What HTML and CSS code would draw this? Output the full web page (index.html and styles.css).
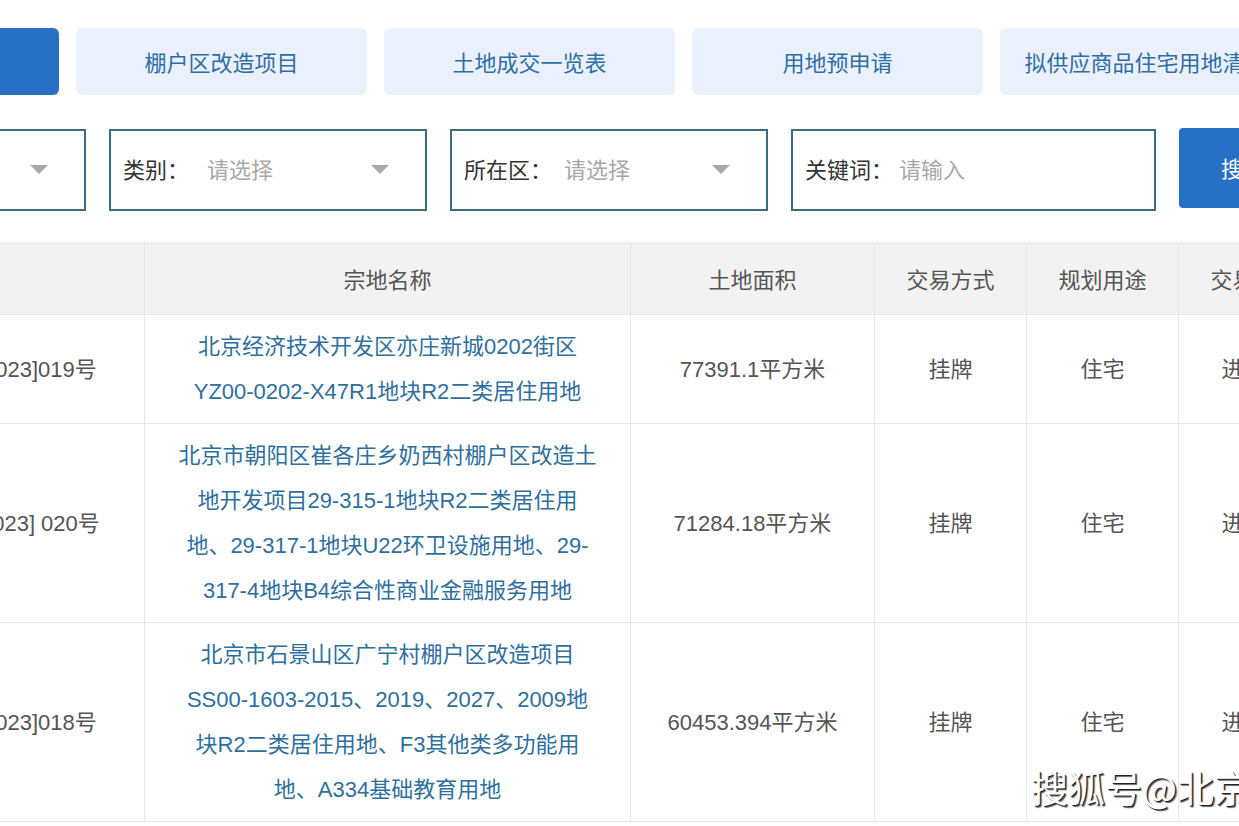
FILE: index.html
```html
<!DOCTYPE html>
<html lang="zh-CN">
<head>
    <meta charset="UTF-8">
    <meta name="viewport" content="width=device-width, initial-scale=1.0">
    <title>土地供应信息</title>
    <link rel="stylesheet" href="styles.css">
</head>
<body>
    <div class="page">
        <nav class="tabs">
            <a class="tab active">经营性用地供应</a>
            <a class="tab">棚户区改造项目</a>
            <a class="tab">土地成交一览表</a>
            <a class="tab">用地预申请</a>
            <a class="tab">拟供应商品住宅用地清单</a>
        </nav>

        <div class="filters">
            <div class="filter">
                <span class="filter-label">年份：</span>
                <span class="filter-value">请选择</span>
                <span class="caret"></span>
            </div>
            <div class="filter">
                <span class="filter-label">类别：</span>
                <span class="filter-value wide">请选择</span>
                <span class="caret"></span>
            </div>
            <div class="filter">
                <span class="filter-label">所在区：</span>
                <span class="filter-value">请选择</span>
                <span class="caret"></span>
            </div>
            <div class="filter keyword">
                <span class="filter-label">关键词：</span>
                <span class="filter-value narrow">请输入</span>
            </div>
            <button class="search-btn">搜索</button>
        </div>

        <table class="land-table">
            <colgroup>
                <col class="col-no">
                <col class="col-name">
                <col class="col-area">
                <col class="col-small">
                <col class="col-small">
                <col class="col-small">
            </colgroup>
            <thead>
                <tr>
                    <th>公告编号</th>
                    <th>宗地名称</th>
                    <th>土地面积</th>
                    <th>交易方式</th>
                    <th>规划用途</th>
                    <th>交易状态</th>
                </tr>
            </thead>
            <tbody>
                <tr>
                    <td class="no">京土整储挂(亦)[2023]019号</td>
                    <td class="name"><a>北京经济技术开发区亦庄新城0202街区<br>YZ00-0202-X47R1地块R2二类居住用地</a></td>
                    <td>77391.1平方米</td>
                    <td>挂牌</td>
                    <td>住宅</td>
                    <td>进行中</td>
                </tr>
                <tr>
                    <td class="no">京土整储挂(朝)[2023] 020号</td>
                    <td class="name"><a>北京市朝阳区崔各庄乡奶西村棚户区改造土<br>地开发项目29-315-1地块R2二类居住用<br>地、29-317-1地块U22环卫设施用地、29-<br>317-4地块B4综合性商业金融服务用地</a></td>
                    <td>71284.18平方米</td>
                    <td>挂牌</td>
                    <td>住宅</td>
                    <td>进行中</td>
                </tr>
                <tr>
                    <td class="no">京土整储挂(石)[2023]018号</td>
                    <td class="name"><a>北京市石景山区广宁村棚户区改造项目<br>SS00-1603-2015、2019、2027、2009地<br>块R2二类居住用地、F3其他类多功能用<br>地、A334基础教育用地</a></td>
                    <td>60453.394平方米</td>
                    <td>挂牌</td>
                    <td>住宅</td>
                    <td>进行中</td>
                </tr>
            </tbody>
        </table>
    </div>

    <div class="watermark">搜狐号@北京青年报</div>
</body>
</html>
```

FILE: styles.css
```css
html, body {
    margin: 0;
    overflow: hidden;
    background-color: #fff;
}
body {
    font-family: "Liberation Sans", "Noto Sans CJK SC", sans-serif;
    color: #555;
    font-size: 22px;
}
.page {
    margin-left: -232px;
    padding-top: 28px;
    width: 1700px;
}

/* tabs */
.tabs {
    display: flex;
    gap: 17px;
}
.tab {
    width: 291px;
    height: 67px;
    padding-bottom: 2px;
    box-sizing: border-box;
    display: flex;
    align-items: center;
    justify-content: center;
    border-radius: 6px;
    background-color: #eaf1fc;
    color: #2d6ea6;
    white-space: nowrap;
    overflow: hidden;
}
.tab.active {
    background-color: #2870c6;
    color: #fff;
}

/* filters */
.filters {
    display: flex;
    align-items: flex-start;
    gap: 23px;
    margin-top: 34px;
}
.filter {
    position: relative;
    box-sizing: border-box;
    width: 318px;
    height: 82px;
    border: 2px solid #406a7e;
    display: flex;
    align-items: center;
    padding-left: 12px;
    padding-bottom: 5px;
}
.filter.keyword {
    width: 365px;
}
.filter-label {
    color: #333;
}
.filter-value {
    margin-left: 12px;
    color: #a8a8a8;
}
.filter-value.wide {
    margin-left: 18px;
}
.filter-value.narrow {
    margin-left: 6px;
}
.caret {
    position: absolute;
    right: 36px;
    top: 34px;
    width: 0;
    height: 0;
    border-left: 9px solid transparent;
    border-right: 9px solid transparent;
    border-top: 9px solid #a9a9a9;
}
.search-btn {
    width: 128px;
    height: 80px;
    margin-top: -1px;
    padding-bottom: 4px;
    border: none;
    border-radius: 4px;
    background-color: #2870c6;
    color: #fff;
    font-family: inherit;
    font-size: 22px;
}

/* table */
.land-table {
    margin-top: 32px;
    table-layout: fixed;
    border-collapse: collapse;
    width: 1562px;
    border-top: 1px solid #dedede;
    box-shadow: 0 -2px 3px rgba(0,0,0,0.04);
}
.col-no { width: 376px; }
.col-name { width: 486px; }
.col-area { width: 244px; }
.col-small { width: 152px; }
.land-table th,
.land-table td {
    border: 1px solid #e6e6e6;
    text-align: center;
    white-space: nowrap;
    overflow: hidden;
    color: #555;
    font-weight: normal;
}
.land-table th {
    height: 67px;
    padding: 0 0 3px;
    background-color: #f2f2f2;
}
.land-table td {
    padding: 9px 0;
    line-height: 45px;
}
.land-table td.no {
    padding-left: 14px;
}
.land-table td.name a {
    color: #2f6fa0;
}

.watermark {
    position: absolute;
    left: 1031px;
    top: 760px;
    font-family: "Noto Sans CJK SC", sans-serif;
    font-size: 37px;
    color: #fff;
    white-space: nowrap;
    text-shadow: 1px 1px 0 #222, 2px 2px 1px rgba(0,0,0,0.6);
}
```
